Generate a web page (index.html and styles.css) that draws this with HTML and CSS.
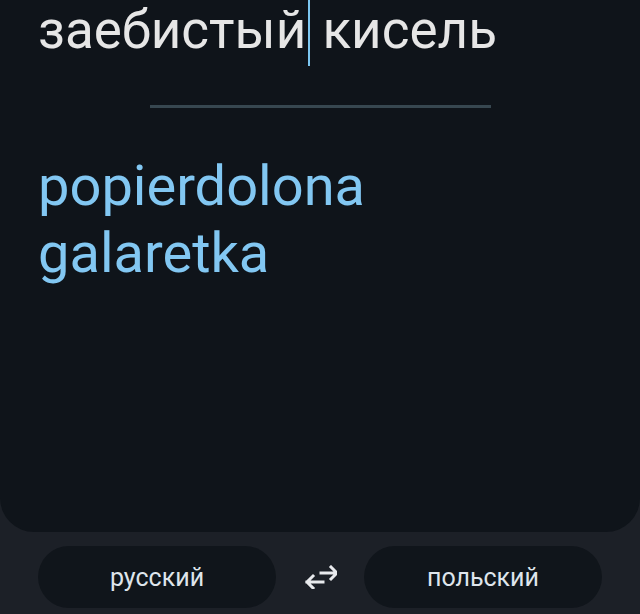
FILE: index.html
```html
<!DOCTYPE html>
<html lang="ru">
<head>
    <meta charset="UTF-8">
    <meta name="viewport" content="width=device-width, initial-scale=1.0">
    <title>Переводчик</title>
    <link rel="stylesheet" href="styles.css">
</head>
<body>
    <div class="card">
        <div class="source">заебистый<span class="caret"></span> кисель</div>
        <div class="divider"></div>
        <div class="target">popierdolona<br>galaretka</div>
    </div>

    <!-- Выбор языков -->
    <div class="langs">
        <button class="lang">русский</button>
        <button class="swap" aria-label="Поменять языки">
            <svg width="34" height="24" viewBox="0 0 34 24">
                <path d="M18 8 H34 M28 2 L34 8 L28 14" fill="none" stroke="#e8eaed" stroke-width="3" stroke-linecap="square" stroke-linejoin="miter"/>
                <path d="M20 17 H4 M10 11 L4 17 L10 23" fill="none" stroke="#e8eaed" stroke-width="3" stroke-linecap="square" stroke-linejoin="miter"/>
            </svg>
        </button>
        <button class="lang">польский</button>
    </div>
</body>
</html>
```

FILE: styles.css
```css
body {
    margin: 0;
    padding: 0;
    width: 640px;
    height: 614px;
    overflow: hidden;
    background: #1c2027;
    font-family: Roboto, "Noto Sans", sans-serif;
}
.card {
    height: 532px;
    box-sizing: border-box;
    background: #0f141a;
    border-radius: 0 0 34px 34px;
    padding: 0 38px;
    overflow: hidden;
}
.source {
    margin-top: -4px;
    font-size: 53px;
    line-height: 67px;
    color: #e6e6e6;
    white-space: nowrap;
}
.caret {
    display: inline-block;
    width: 2px;
    height: 70px;
    margin: 0 -1px 0 2px;
    vertical-align: -18px;
    background: #7cc6f0;
}
.divider {
    width: 341px;
    height: 3px;
    margin: 39px auto 0;
    background: #374750;
}
.target {
    margin-top: 45px;
    font-size: 56px;
    line-height: 67px;
    color: #82c7f2;
}
.langs {
    display: flex;
    align-items: center;
    justify-content: space-between;
    padding: 14px 38px 0;
}
.lang {
    width: 238px;
    height: 62px;
    border: none;
    border-radius: 31px;
    background: #10151b;
    color: #dfe5ec;
    font-family: Roboto, "Noto Sans", sans-serif;
    font-size: 25px;
    font-weight: 400;
}
.swap {
    display: flex;
    padding: 0;
    border: none;
    background: none;
}
```
